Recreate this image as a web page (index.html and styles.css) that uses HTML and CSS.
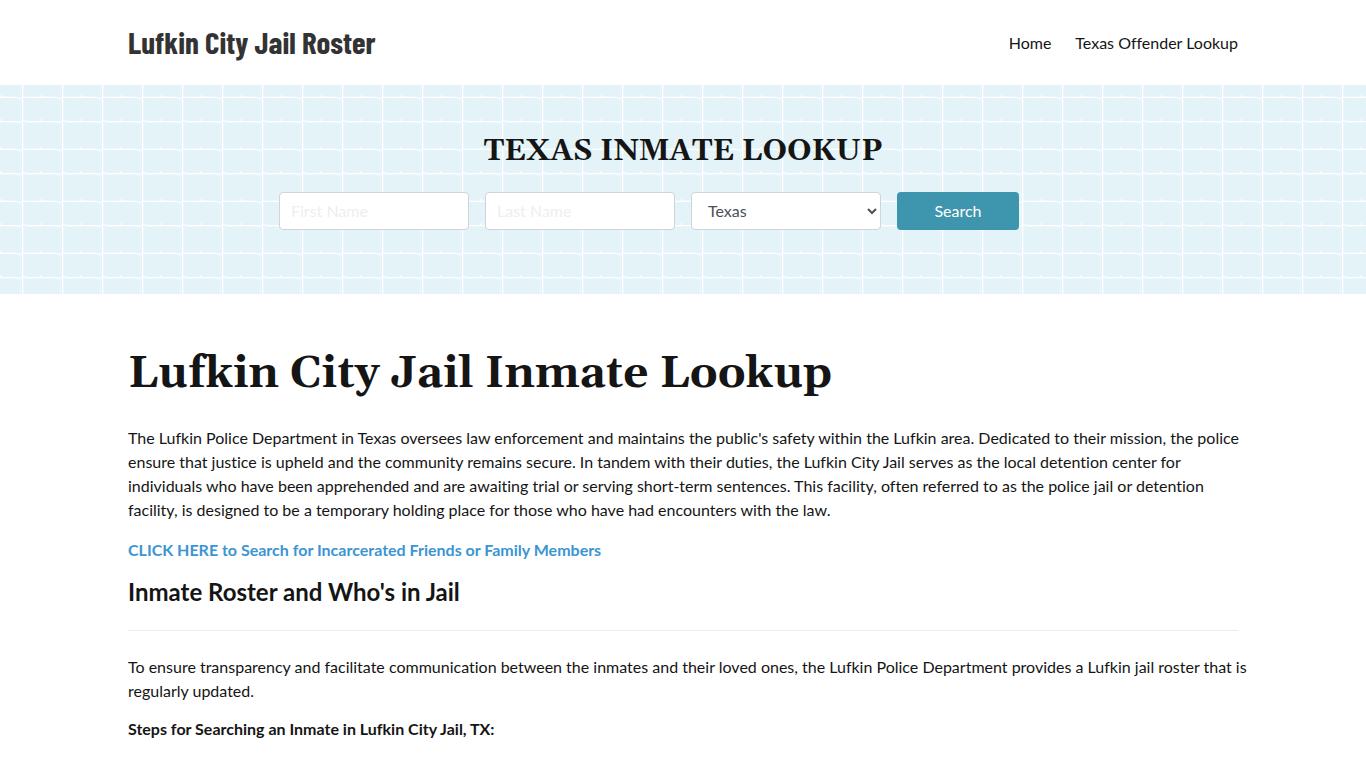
FILE: index.html
```html
<!DOCTYPE html>
<html lang="en">
<head>
<meta charset="utf-8">
<meta name="viewport" content="width=device-width, initial-scale=1">
<title>Lufkin City Jail Roster</title>
<link rel="stylesheet" href="styles.css">
</head>
<body>
<header class="container site-header">
  <a class="brand" href="#">Lufkin City Jail Roster</a>
  <nav class="site-nav">
    <a href="#">Home</a>
    <a href="#">Texas Offender Lookup</a>
  </nav>
</header>
<section class="lookup">
  <h2 class="lookup-title">TEXAS INMATE LOOKUP</h2>
  <form class="lookup-form">
    <input class="field" type="text" placeholder="First Name" aria-label="First Name">
    <input class="field" type="text" placeholder="Last Name" aria-label="Last Name">
    <select class="field field-select" aria-label="State"><option>Texas</option></select>
    <button class="search-button" type="button">Search</button>
  </form>
</section>
<main class="container content">
  <h1 class="page-title">Lufkin City Jail Inmate Lookup</h1>
  <p>The Lufkin Police Department in Texas oversees law enforcement and maintains the public's safety within the Lufkin area. Dedicated to their mission, the police ensure that justice is upheld and the community remains secure. In tandem with their duties, the Lufkin City Jail serves as the local detention center for individuals who have been apprehended and are awaiting trial or serving short-term sentences. This facility, often referred to as the police jail or detention facility, is designed to be a temporary holding place for those who have had encounters with the law.</p>
  <p><a class="search-link" href="#">CLICK HERE to Search for Incarcerated Friends or Family Members</a></p>
  <h2 class="section-title">Inmate Roster and Who's in Jail</h2>
  <hr class="divider">
  <p class="intro">To ensure transparency and facilitate communication between the inmates and their loved ones, the Lufkin Police Department provides a Lufkin jail roster that is regularly updated.</p>
  <p><strong>Steps for Searching an Inmate in Lufkin City Jail, TX:</strong></p>
</main>
</body>
</html>
```
FILE: styles.css
```css
* { box-sizing: border-box; }
body {
  margin: 0;
  background: #fff;
  color: #151515;
  font-family: Lato, "Open Sans", sans-serif;
  font-size: 16px;
  line-height: 24px;
  font-variant-ligatures: none;
}
a { color: inherit; text-decoration: none; }
.container { max-width: 1140px; margin: 0 auto; padding: 0 15px; }
.site-header {
  display: flex;
  align-items: center;
  justify-content: space-between;
  min-height: 85px;
}
.brand {
  padding-bottom: 2px;
  color: #333;
  font: bold 31px/36px "Barlow Condensed", "Roboto Condensed", Roboto, sans-serif;
}
.site-nav { display: flex; gap: 24px; }
.lookup {
  padding: 48px 16px 64px;
  background: #e3f3f7 url("data:image/svg+xml,%3Csvg xmlns='http://www.w3.org/2000/svg' width='40' height='52'%3E%3Cg fill='none' stroke='white'%3E%3Cpath d='M22.5 0V52M0 12.5H18M25 12.5H40M0 36.5H18M25 36.5H40'/%3E%3Cpath stroke-opacity='.35' d='M20.5 0V9M20.5 16V33M20.5 40V52M23.5 0V52M0 11.5H16M26 11.5H38M0 37.5H18M25 37.5H40'/%3E%3Cpath stroke-width='1.4' stroke-opacity='.8' d='M18 14L25 11M18 38L25 35M0 11.5L2 10.5M0 35.5L2 34.5M39 13L40 12M39 37L40 36'/%3E%3C/g%3E%3C/svg%3E");
}
.lookup-title {
  margin: 0 0 23px;
  font: bold 30px/36px Gelasio, Georgia, "Liberation Serif", serif;
  text-align: center;
}
.lookup-form {
  display: grid;
  grid-template-columns: repeat(3, minmax(0, 190px)) 122px;
  gap: 16px;
  max-width: 808px;
  margin: 0 auto;
}
.field, .search-button {
  height: 38px;
  border-radius: 4px;
  font: 16px/24px Lato, sans-serif;
}
.field {
  width: 100%;
  padding: 5px 12px 7px 11px;
  border: 1px solid #ced4da;
  background: #fff;
  color: #495057;
}
.field::placeholder { color: #eceff1; opacity: 1; }
.field-select { padding: 5px 0 7px 12px; }
.search-button { border: 0; background: #3e95ae; color: #fff; }
.content { padding-top: 56px; }
.content p { margin: 0 -15px 16px 0; }
.content .intro { margin-bottom: 14px; }
.page-title {
  margin: 0 0 28px;
  font: bold 44px/48px Gelasio, Georgia, "Liberation Serif", serif;
}
.search-link { color: #3b95d3; font-weight: bold; }
.section-title { margin: 0 0 24px; font-size: 24px; line-height: 28px; font-weight: bold; }
.divider { margin: 0 0 24px; border: 0; border-top: 1px solid #ececec; }
```
